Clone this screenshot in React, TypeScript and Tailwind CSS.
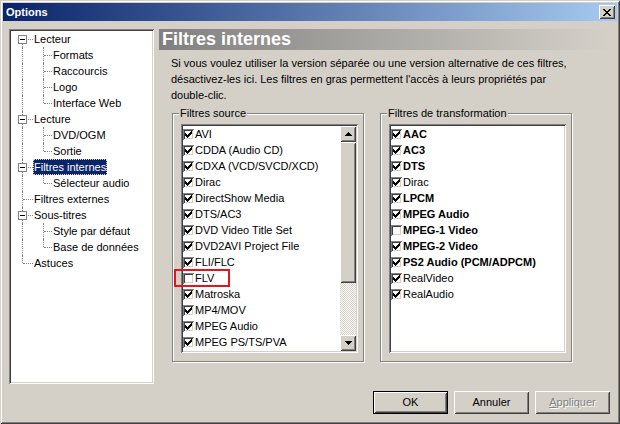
import React from "react";

// relief classique Windows : ombres internes sur 2 px
const RAISED =
  "shadow-[inset_1px_1px_0_#fff,inset_-1px_-1px_0_#404040,inset_2px_2px_0_#D4D0C8,inset_-2px_-2px_0_#808080]";
const SUNKEN =
  "shadow-[inset_1px_1px_0_#808080,inset_-1px_-1px_0_#fff,inset_2px_2px_0_#404040,inset_-2px_-2px_0_#D4D0C8]";

type TreeItem = {
  label: string;
  level: 0 | 1;
  expand?: boolean;
  lastChild?: boolean;
  selected?: boolean;
};

const TREE: TreeItem[] = [
  { label: "Lecteur", level: 0, expand: true },
  { label: "Formats", level: 1 },
  { label: "Raccourcis", level: 1 },
  { label: "Logo", level: 1 },
  { label: "Interface Web", level: 1, lastChild: true },
  { label: "Lecture", level: 0, expand: true },
  { label: "DVD/OGM", level: 1 },
  { label: "Sortie", level: 1, lastChild: true },
  { label: "Filtres internes", level: 0, expand: true, selected: true },
  { label: "Sélecteur audio", level: 1, lastChild: true },
  { label: "Filtres externes", level: 0 },
  { label: "Sous-titres", level: 0, expand: true },
  { label: "Style par défaut", level: 1 },
  { label: "Base de données", level: 1, lastChild: true },
  { label: "Astuces", level: 0 },
];

type Filter = { label: string; checked: boolean; bold?: boolean };

const SOURCES: Filter[] = [
  { label: "AVI", checked: true },
  { label: "CDDA (Audio CD)", checked: true },
  { label: "CDXA (VCD/SVCD/XCD)", checked: true },
  { label: "Dirac", checked: true },
  { label: "DirectShow Media", checked: true },
  { label: "DTS/AC3", checked: true },
  { label: "DVD Video Title Set", checked: true },
  { label: "DVD2AVI Project File", checked: true },
  { label: "FLI/FLC", checked: true },
  { label: "FLV", checked: false },
  { label: "Matroska", checked: true },
  { label: "MP4/MOV", checked: true },
  { label: "MPEG Audio", checked: true },
  { label: "MPEG PS/TS/PVA", checked: true },
];

const TRANSFORMS: Filter[] = [
  { label: "AAC", checked: true, bold: true },
  { label: "AC3", checked: true, bold: true },
  { label: "DTS", checked: true, bold: true },
  { label: "Dirac", checked: true },
  { label: "LPCM", checked: true, bold: true },
  { label: "MPEG Audio", checked: true, bold: true },
  { label: "MPEG-1 Video", checked: false, bold: true },
  { label: "MPEG-2 Video", checked: true, bold: true },
  { label: "PS2 Audio (PCM/ADPCM)", checked: true, bold: true },
  { label: "RealVideo", checked: true },
  { label: "RealAudio", checked: true },
];

function CheckMark() {
  // coche pixel par pixel, 7x7
  const rects: [number, number, number][] = [
    [6, 0, 1],
    [5, 1, 2],
    [0, 2, 1],
    [4, 2, 3],
    [0, 3, 2],
    [3, 3, 3],
    [0, 4, 5],
    [1, 5, 3],
    [2, 6, 1],
  ];
  return (
    <svg width="7" height="7" viewBox="0 0 7 7" shapeRendering="crispEdges">
      {rects.map(([x, y, w], i) => (
        <rect key={i} x={x} y={y} width={w} height={1} fill="#000" />
      ))}
    </svg>
  );
}

function CheckRow({ item }: { item: Filter }) {
  return (
    <div className="flex h-4 items-center">
      <span
        className={`flex h-[11px] w-[11px] shrink-0 items-center justify-center bg-white ${SUNKEN}`}
      >
        {item.checked && <CheckMark />}
      </span>
      <span
        className={`ml-px whitespace-nowrap leading-4 ${item.bold ? "font-bold" : ""}`}
      >
        {item.label}
      </span>
    </div>
  );
}

function Arrow({ up }: { up?: boolean }) {
  const rows = up
    ? [
        [3, 0, 1],
        [2, 1, 3],
        [1, 2, 5],
        [0, 3, 7],
      ]
    : [
        [0, 0, 7],
        [1, 1, 5],
        [2, 2, 3],
        [3, 3, 1],
      ];
  return (
    <svg width="7" height="4" viewBox="0 0 7 4" shapeRendering="crispEdges">
      {rows.map(([x, y, w], i) => (
        <rect key={i} x={x} y={y} width={w} height={1} fill="#000" />
      ))}
    </svg>
  );
}

function ScrollBar() {
  return (
    <div className="flex h-full w-4 shrink-0 flex-col">
      <div className={`flex h-4 items-center justify-center bg-[#D4D0C8] ${RAISED}`}>
        <Arrow up />
      </div>
      <div className={`h-[141px] bg-[#D4D0C8] ${RAISED}`} />
      <div className="flex-1 bg-[repeating-conic-gradient(#D4D0C8_0%_25%,#fff_0%_50%)] bg-[length:2px_2px]" />
      <div className={`flex h-4 items-center justify-center bg-[#D4D0C8] ${RAISED}`}>
        <Arrow />
      </div>
    </div>
  );
}

function GroupBox({
  title,
  children,
}: {
  title: string;
  children: React.ReactNode;
}) {
  return (
    <div className="relative h-[249px] w-[192px] border border-[#808080] pl-2 pt-[10px] shadow-[inset_1px_1px_0_#fff,1px_1px_0_#fff]">
      <span className="absolute -top-[7px] left-[6px] bg-[#D4D0C8] px-px leading-[13px]">
        {title}
      </span>
      {children}
    </div>
  );
}

function TreeRow({ item, index }: { item: TreeItem; index: number }) {
  const isFirst = index === 0;
  const isLast = index === TREE.length - 1;
  const dot = "border-dotted border-[#808080]";
  return (
    <div className={`relative flex h-4 ${item.level === 0 ? "pl-[22px]" : "pl-[41px]"}`}>
      <span
        className={`absolute left-[11px] border-l ${dot} ${
          isFirst ? "top-2 bottom-0" : isLast ? "top-0 h-2" : "top-0 bottom-0"
        }`}
      />
      {item.level === 0 && (
        <span className={`absolute left-[12px] top-2 w-[10px] border-t ${dot}`} />
      )}
      {item.level === 1 && (
        <>
          <span
            className={`absolute left-[32px] border-l ${dot} ${
              item.lastChild ? "top-0 h-2" : "top-0 bottom-0"
            }`}
          />
          <span className={`absolute left-[33px] top-2 w-[8px] border-t ${dot}`} />
        </>
      )}
      {item.expand && (
        <span className="absolute left-[7px] top-[4px] flex h-[9px] w-[9px] items-center justify-center border border-[#808080] bg-white">
          <span className="h-px w-[5px] bg-black" />
        </span>
      )}
      <span
        className={`relative whitespace-nowrap px-px leading-4 ${
          item.selected
            ? "bg-[#0A246A] text-white outline outline-1 -outline-offset-1 outline-dotted outline-[#F5DB95]"
            : ""
        }`}
      >
        {item.label}
      </span>
    </div>
  );
}

function Button({
  children,
  primary,
  disabled,
}: {
  children: React.ReactNode;
  primary?: boolean;
  disabled?: boolean;
}) {
  return (
    <div
      className={`flex h-[23px] w-[75px] ${primary ? "border border-black" : ""}`}
    >
      <div
        className={`flex flex-1 items-center justify-center bg-[#D4D0C8] ${RAISED} ${
          disabled ? "text-[#808080] [text-shadow:1px_1px_0_#fff]" : ""
        }`}
      >
        {children}
      </div>
    </div>
  );
}

export default function App() {
  return (
    <div
      className={`h-[424px] w-[620px] bg-[#D4D0C8] p-[3px] font-['Liberation_Sans',Arial,sans-serif] text-[11px] text-black shadow-[inset_1px_1px_0_#D4D0C8,inset_-1px_-1px_0_#404040,inset_2px_2px_0_#fff,inset_-2px_-2px_0_#808080]`}
    >
      <div className="flex h-full flex-col">
        {/* barre de titre */}
        <div className="flex h-[18px] items-center justify-between bg-[linear-gradient(to_right,#0A246A,#A6CAF0)] pl-[3px] pr-[2px]">
          <span className="font-bold text-white">Options</span>
          <span
            className={`flex h-[14px] w-4 items-center justify-center bg-[#D4D0C8] ${RAISED}`}
          >
            <svg width="8" height="7" viewBox="0 0 8 7" shapeRendering="crispEdges">
              {[
                [0, 0, 2], [6, 0, 2],
                [1, 1, 2], [5, 1, 2],
                [2, 2, 4],
                [3, 3, 2],
                [2, 4, 4],
                [1, 5, 2], [5, 5, 2],
                [0, 6, 2], [6, 6, 2],
              ].map(([x, y, w], i) => (
                <rect key={i} x={x} y={y} width={w} height={1} fill="#000" />
              ))}
            </svg>
          </span>
        </div>

        <div className="flex flex-1 flex-col pl-[6px] pt-[8px]">
          <div className="flex h-[355px]">
            {/* arborescence */}
            <div className={`w-[145px] shrink-0 bg-white p-[2px] ${SUNKEN}`}>
              {TREE.map((item, i) => (
                <TreeRow key={item.label} item={item} index={i} />
              ))}
            </div>

            <div className="ml-[5px] w-[451px]">
              <div className="h-[21px] bg-[linear-gradient(to_right,#808080,#D4D0C8)] pl-[3px] text-[18px] font-bold leading-[21px] text-white">
                Filtres internes
              </div>
              <p className="mt-[5px] whitespace-nowrap pl-[12px] leading-4">
                Si vous voulez utiliser la version séparée ou une version alternative de ces filtres,
                <br />
                désactivez-les ici. Les filtres en gras permettent l'accès à leurs propriétés par
                <br />
                double-clic.
              </p>

              <div className="mt-[10px] flex gap-4 pl-[13px]">
                <GroupBox title="Filtres source">
                  <div className={`relative flex h-[229px] w-[177px] bg-white p-[2px] ${SUNKEN}`}>
                    <div className="flex-1 overflow-hidden">
                      {SOURCES.map((f) => (
                        <CheckRow key={f.label} item={f} />
                      ))}
                    </div>
                    <ScrollBar />
                  </div>
                  {/* encadré rouge autour de FLV */}
                  <span className="absolute left-px top-[155px] h-[18px] w-[56px] border-2 border-[#E3151B]" />
                </GroupBox>

                <GroupBox title="Filtres de transformation">
                  <div className={`h-[229px] w-[177px] bg-white p-[2px] ${SUNKEN}`}>
                    {TRANSFORMS.map((f) => (
                      <CheckRow key={f.label} item={f} />
                    ))}
                  </div>
                </GroupBox>
              </div>
            </div>
          </div>

          <div className="mt-[7px] flex justify-end gap-[6px] pr-[7px]">
            <Button primary>OK</Button>
            <Button>Annuler</Button>
            <Button disabled>
              <span>
                <span className="underline">A</span>ppliquer
              </span>
            </Button>
          </div>
        </div>
      </div>
    </div>
  );
}
